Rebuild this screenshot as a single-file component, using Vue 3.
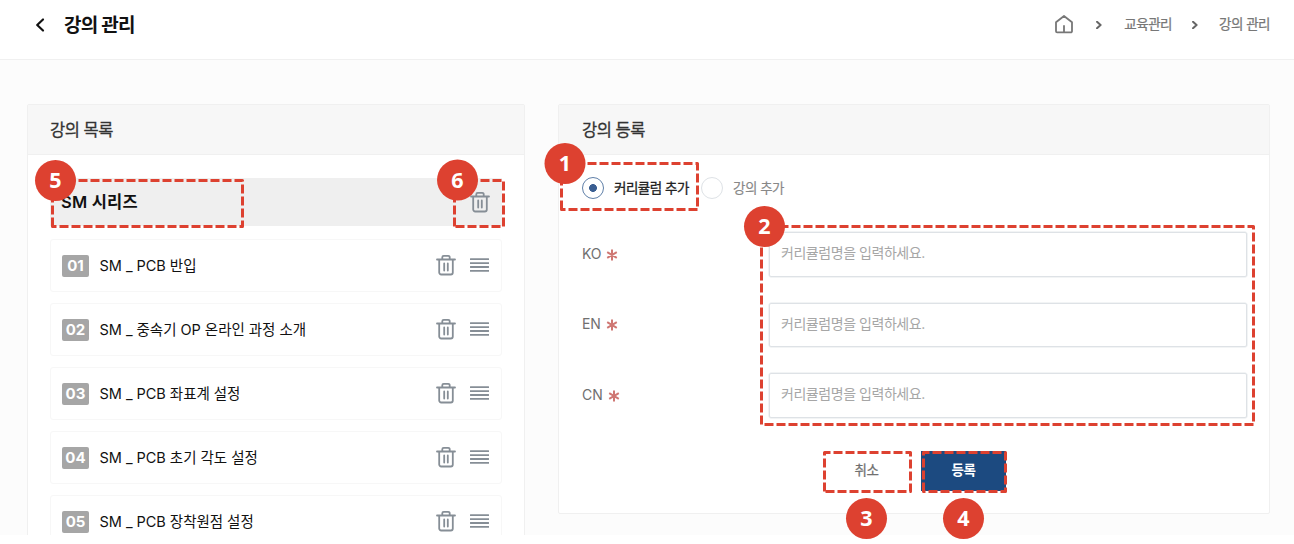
<script setup>
const lessons = [
  'SM _ PCB 반입',
  'SM _ 중속기 OP 온라인 과정 소개',
  'SM _ PCB 좌표계 설정',
  'SM _ PCB 초기 각도 설정',
  'SM _ PCB 장착원점 설정',
]
const languages = ['KO', 'EN', 'CN']

// Annotation frames: left, top, right, bottom of the stroke centre line
const frames = [
  [561.5, 163.5, 697.5, 209.5],
  [761.5, 226.5, 1253.5, 424.5],
  [824.5, 452.5, 910.5, 491.5],
  [923.5, 452.5, 1005.5, 491.5],
  [52.5, 180.5, 242.5, 226.5],
  [454.5, 180.5, 503.5, 226.5],
]
const badges = [
  [565, 163.5],
  [764.5, 226.5],
  [866.5, 518.5],
  [963.5, 518.5],
  [55.5, 180.5],
  [457.5, 180],
]
const framePath = ([l, t, r, b]) => `M${l} ${b}V${t}H${r}V${b}Z`
</script>

<template>
  <div class="screen">
    <header class="topbar">
      <svg class="back" width="10" height="16" viewBox="0 0 10 16"><path d="M8 2.5 2.2 8 8 13.5" /></svg>
      <h1>강의 관리</h1>
      <nav class="crumbs">
        <svg class="home" width="20" height="20" viewBox="0 0 20 20">
          <path d="M2 8.2 10 2l8 6.2v9a1.2 1.2 0 0 1-1.2 1.2H3.2A1.2 1.2 0 0 1 2 17.200zM10 12v6" />
        </svg>
        <svg class="sep first" width="6" height="8" viewBox="0 0 6 8"><path d="m1 .8 3.600 3.200L1 7.200" /></svg>
        <span>교육관리</span>
        <svg class="sep" width="6" height="8" viewBox="0 0 6 8"><path d="m1 .8 3.600 3.200L1 7.200" /></svg>
        <span>강의 관리</span>
      </nav>
    </header>

    <main class="content">
      <section class="panel list-panel">
        <h2>강의 목록</h2>
        <div class="list">
          <div class="series">
            <strong>SM 시리즈</strong>
            <svg class="trash" width="20" height="22" viewBox="0 0 20 22">
              <path d="M1 5.500h18M3.200 5.500v13a2 2 0 0 0 2 2h9.600a2 2 0 0 0 2-2v-13M6.300 5.500V3.200a1.400 1.400 0 0 1 1.400-1.400h4.600a1.400 1.400 0 0 1 1.400 1.400v2.300M8.200 9.500v7M11.800 9.500v7" />
            </svg>
          </div>
          <div v-for="(name, i) in lessons" :key="name" class="lesson">
            <span class="num">0{{ i + 1 }}</span>
            <span class="name">{{ name }}</span>
            <svg class="trash" width="20" height="22" viewBox="0 0 20 22">
              <path d="M1 5.500h18M3.200 5.500v13a2 2 0 0 0 2 2h9.600a2 2 0 0 0 2-2v-13M6.300 5.500V3.200a1.400 1.400 0 0 1 1.400-1.400h4.600a1.400 1.400 0 0 1 1.400 1.400v2.300M8.200 9.500v7M11.800 9.500v7" />
            </svg>
            <svg class="grip" width="19" height="14" viewBox="0 0 19 14">
              <path d="M.5 1.200h18M.5 5.100h18M.5 9h18M.5 12.900h18" />
            </svg>
          </div>
        </div>
      </section>

      <section class="panel form-panel">
        <h2>강의 등록</h2>
        <div class="form">
          <div class="radios">
            <span class="radio on"></span><span class="radio-label on">커리큘럼 추가</span>
            <span class="radio"></span><span class="radio-label">강의 추가</span>
          </div>
          <div v-for="lang in languages" :key="lang" class="field">
            <span class="lang">{{ lang }}</span>
            <svg class="star" width="12" height="12" viewBox="0 0 12 12"><path d="M6 .5v11M1.200 3.200l9.600 5.600M10.800 3.200 1.200 8.800" /></svg>
            <div class="input">커리큘럼명을 입력하세요.</div>
          </div>
          <div class="actions">
            <div class="btn">취소</div>
            <div class="btn primary">등록</div>
          </div>
        </div>
      </section>
    </main>

    <svg class="notes" width="1294" height="544" viewBox="0 0 1294 544">
      <path v-for="(f, i) in frames" :key="'f' + i" class="frame" :d="framePath(f)" />
      <g v-for="(b, i) in badges" :key="'b' + i">
        <circle :cx="b[0]" :cy="b[1]" r="20.500" />
        <text :x="b[0]" :y="b[1] + 7.500">{{ i + 1 }}</text>
      </g>
    </svg>
  </div>
</template>

<style>
body { margin: 0; background: #fff; }
</style>

<style scoped>
* { box-sizing: border-box; }
.screen {
  position: relative;
  width: 1294px;
  height: 544px;
  overflow: hidden;
  background: #fff;
  font-family: Inter, "Noto Sans CJK KR", sans-serif;
  color: #111;
}
svg { display: block; flex: none; fill: none; stroke-linecap: round; stroke-linejoin: round; }
h1, h2 { margin: 0; }
.topbar {
  display: flex;
  align-items: center;
  height: 60px;
  padding: 0 24px 10px 35px;
  border-bottom: 1px solid #f0f0f0;
}
.back { stroke: #111; stroke-width: 2.2; }
h1 { margin-left: 19px; padding-top: 2px; font-size: 19px; line-height: 28px; letter-spacing: -0.8px; font-weight: 600; color: #111; }
.crumbs { display: flex; align-items: center; margin-left: auto; font-size: 13.5px; line-height: 20px; letter-spacing: -0.5px; color: #777; -webkit-text-stroke: 0.25px #777; }
.crumbs span { margin-top: -1px; }
.home { margin: -2px 0 0 -1px; stroke: #777; stroke-width: 1.8; }
.sep { margin: 0 21px 0 20px; stroke: #666; stroke-width: 2; }
.sep.first { margin: 0 22px 0 22px; }
.content {
  display: flex;
  align-items: flex-start;
  gap: 33px;
  height: 475px;
  padding: 44px 24px 0 27px;
  overflow: hidden;
  background: #fcfcfc;
}
.panel { border: 1px solid #f0f0f0; border-radius: 2px; background: #fff; }
.list-panel { width: 498px; height: 500px; }
.form-panel { width: 712px; height: 410px; }
h2 {
  height: 50px;
  padding-left: 22px;
  border-bottom: 1px solid #f0f0f0;
  background: #f7f7f7;
  font-size: 16.5px;
  line-height: 51px;
  letter-spacing: -0.5px;
  font-weight: 400;
  color: #333;
  -webkit-text-stroke: 0.3px #333;
}
.form-panel h2 { padding-left: 23px; }
.list { padding: 23px 22px 0; }
.series { display: flex; align-items: center; height: 48px; margin-bottom: 13px; padding: 0 12px 0 11px; background: #efefef; }
.series strong { margin-top: -1px; font-size: 16.5px; line-height: 24px; letter-spacing: 0.2px; font-weight: 600; color: #111; }
.series .trash { margin: -1px 0 0 auto; }
.trash { margin-top: -2px; stroke: #868e96; stroke-width: 1.8; }
.grip { margin: -2px 0 0 14px; stroke: #868e96; stroke-width: 1.8; }
.lesson { display: flex; align-items: center; height: 53px; margin-bottom: 11px; padding: 0 12px 0 11px; border: 1px solid #f7f7f7; border-radius: 3px; }
.num { width: 27px; height: 22px; border-radius: 2px; background: #a6a6a6; color: #fff; font-size: 15px; line-height: 22px; font-weight: 700; text-align: center; }
.name { margin-left: 10.5px; font-size: 14.5px; line-height: 22px; letter-spacing: -0.03px; }
.name + .trash { margin-left: auto; }
.form { padding: 22px 22px 0 23px; }
.radios { display: flex; align-items: center; height: 22px; margin-bottom: 33px; }
.radio { width: 22px; height: 22px; border: 1.5px solid #dee2e6; border-radius: 50%; background: #fff; }
.radio.on { border: 1.5px solid #5f7fa8; background: radial-gradient(circle, #3b5f92 3.600px, #fff 4.200px); }
.radio-label { margin-left: 10px; font-size: 13.5px; line-height: 22px; letter-spacing: -0.5px; color: #888; -webkit-text-stroke: 0.15px currentColor; }
.radio-label.on { width: 87px; color: #222; -webkit-text-stroke: 0.3px #222; }
.field { display: flex; align-items: center; height: 44.500px; margin-bottom: 26.200px; }
.lang { margin-top: -2px; font-size: 14px; letter-spacing: -0.1px; color: #707070; }
.star { margin: 1px 0 0 5px; stroke: #cf7773; stroke-width: 2; stroke-linecap: butt; }
.input {
  width: 478px;
  height: 44.500px;
  margin-left: auto;
  padding-left: 11px;
  border: 1px solid #dee2e6;
  box-shadow: 0 0 0 0.500px #e6e9ec;
  border-radius: 2px;
  font-size: 14px;
  line-height: 40px;
  letter-spacing: -0.45px;
  color: #a6a6a6;
}
.actions { display: flex; gap: 11px; padding-left: 241px; margin-top: 33px; }
.btn { width: 87px; height: 40px; font-size: 13.5px; line-height: 39px; letter-spacing: -0.5px; text-align: center; color: #707070; -webkit-text-stroke: 0.25px #707070; }
.primary { width: 85px; background: #1c4a80; color: #fff; -webkit-text-stroke: 0; font-weight: 600; }
.notes { position: absolute; inset: 0; }
.frame { stroke: #dd4130; stroke-width: 3; stroke-dasharray: 9 3; stroke-linecap: butt; }
circle { fill: #dd4130; }
text { fill: #fff; font: 700 21.500px "Noto Sans", "Open Sans", sans-serif; text-anchor: middle; }
</style>
